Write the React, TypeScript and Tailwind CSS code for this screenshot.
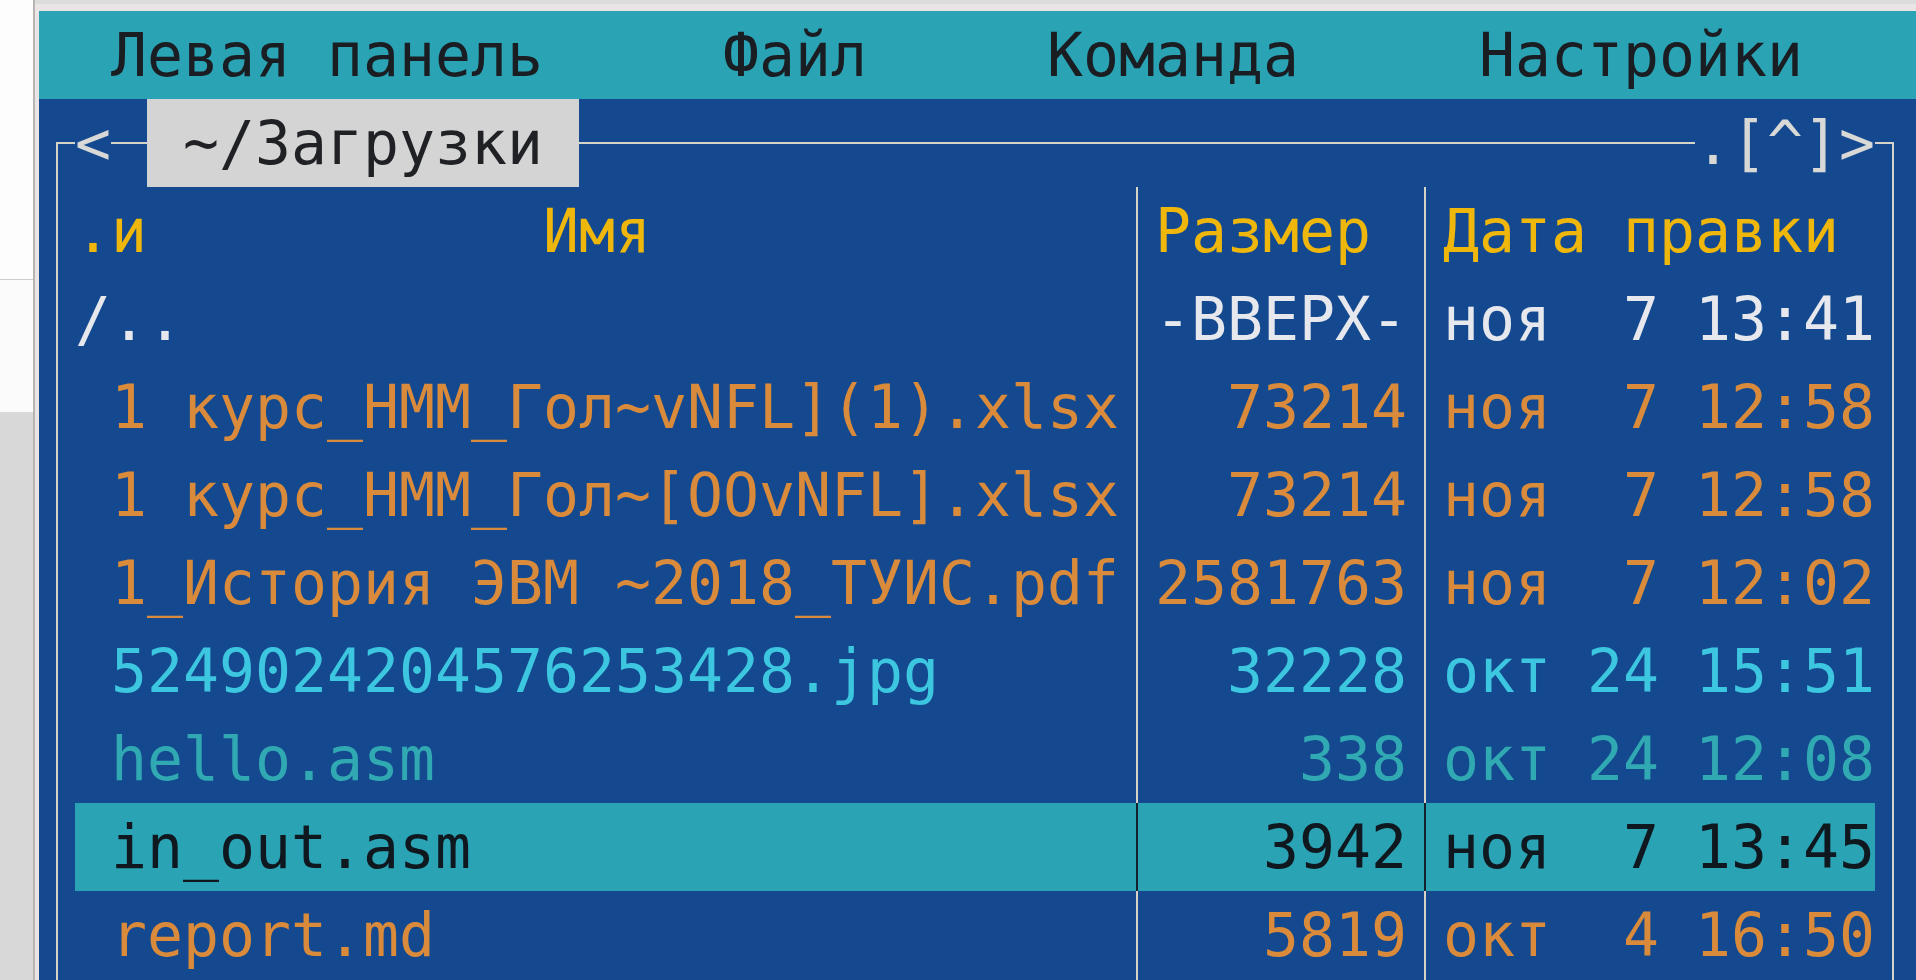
type FileRow = {
  name: string
  size: string
  date: string
  color: string
  selected?: boolean
}

const files: FileRow[] = [
  { name: '/..', size: '-ВВЕРХ-', date: 'ноя  7 13:41', color: 'text-[#e6e8ee]' },
  { name: ' 1 курс_НММ_Гол~vNFL](1).xlsx', size: '73214', date: 'ноя  7 12:58', color: 'text-[#d98b3b]' },
  { name: ' 1 курс_НММ_Гол~[OOvNFL].xlsx', size: '73214', date: 'ноя  7 12:58', color: 'text-[#d98b3b]' },
  { name: ' 1_История ЭВМ ~2018_ТУИС.pdf', size: '2581763', date: 'ноя  7 12:02', color: 'text-[#d98b3b]' },
  { name: ' 5249024204576253428.jpg', size: '32228', date: 'окт 24 15:51', color: 'text-[#3cc6df]' },
  { name: ' hello.asm', size: '338', date: 'окт 24 12:08', color: 'text-[#31a9b2]' },
  { name: ' in_out.asm', size: '3942', date: 'ноя  7 13:45', color: 'text-[#10181f]', selected: true },
  { name: ' report.md', size: '5819', date: 'окт  4 16:50', color: 'text-[#d98b3b]' },
]

function VLine({ dark }: { dark?: boolean }) {
  return (
    <div className="w-[1ch] h-full flex justify-center shrink-0">
      <div className={dark ? 'w-[2px] h-full bg-[#14222c]' : 'w-[2px] h-full bg-[#d6d3ca]'} />
    </div>
  )
}

function PanelRow({ file }: { file: FileRow }) {
  return (
    <div className="flex h-[88px] whitespace-pre">
      <VLine />
      <div className={`flex ${file.selected ? 'bg-[#2aa3b5]' : ''} ${file.color}`}>
        <div className="w-[29ch] shrink-0 overflow-hidden">{file.name}</div>
        <VLine dark={file.selected} />
        <div className="w-[7ch] shrink-0 text-right">{file.size}</div>
        <VLine dark={file.selected} />
        <div className="w-[12ch] shrink-0">{file.date}</div>
      </div>
      <VLine />
      <div className="flex-1" />
    </div>
  )
}

export default function App() {
  return (
    <div className="flex h-[980px] w-[1916px] overflow-hidden bg-white">
      {/* strip of the window behind */}
      <div className="w-[33px] flex flex-col shrink-0">
        <div className="h-[280px] bg-[#fdfdfd] border-b border-[#cdcdcd]" />
        <div className="h-[132px] bg-[#fbfbfb]" />
        <div className="flex-1 bg-[#d8d8d8]" />
      </div>
      <div className="w-[2px] bg-[#b9b4b4] shrink-0" />

      <div className="flex-1 flex flex-col bg-[#ebe4e4] pl-[4px] border-t-[4px] border-[#dcdcdc] pt-[7px]">
        <div className="flex-1 flex flex-col bg-[#14498f] font-[family-name:'DejaVu_Sans_Mono',monospace] text-[59.8px] leading-[88px] overflow-hidden">
          {/* menu bar */}
          <div className="h-[88px] bg-[#2aa3b5] text-[#1a1d22] whitespace-pre shrink-0">
            {'  Левая панель     Файл     Команда     Настройки'}
          </div>

          {/* panel title */}
          <div className="flex h-[88px] items-center whitespace-pre text-[#d8d8d6] shrink-0">
            <div className="w-[1ch] h-full flex flex-col shrink-0">
              <div className="h-[43px]" />
              <div className="flex-1 ml-[17px] border-l-2 border-t-2 border-[#d6d3ca]" />
            </div>
            <span>{'<'}</span>
            <div className="w-[1ch] h-[2px] bg-[#d6d3ca] shrink-0" />
            <div className="h-full bg-[#d4d4d4] text-[#1f2124]">{' ~/Загрузки '}</div>
            <div className="w-[31ch] h-[2px] bg-[#d6d3ca] shrink-0" />
            <span>{'.[^]>'}</span>
            <div className="w-[1ch] h-full flex flex-col shrink-0">
              <div className="h-[43px]" />
              <div className="flex-1 w-[19px] border-r-2 border-t-2 border-[#d6d3ca]" />
            </div>
            <div className="flex-1" />
          </div>

          {/* column headers */}
          <div className="flex h-[88px] whitespace-pre text-[#efb70c] shrink-0">
            <VLine />
            <div className="w-[29ch] shrink-0">{'.и           Имя'}</div>
            <VLine />
            <div className="w-[7ch] shrink-0">Размер</div>
            <VLine />
            <div className="w-[12ch] shrink-0">Дата правки</div>
            <VLine />
            <div className="flex-1" />
          </div>

          {files.map((f) => (
            <PanelRow key={f.name} file={f} />
          ))}
          <div className="flex flex-1 whitespace-pre">
            <VLine />
            <div className="w-[29ch] shrink-0" />
            <VLine />
            <div className="w-[7ch] shrink-0" />
            <VLine />
            <div className="w-[12ch] shrink-0" />
            <VLine />
          </div>
        </div>
      </div>
    </div>
  )
}
